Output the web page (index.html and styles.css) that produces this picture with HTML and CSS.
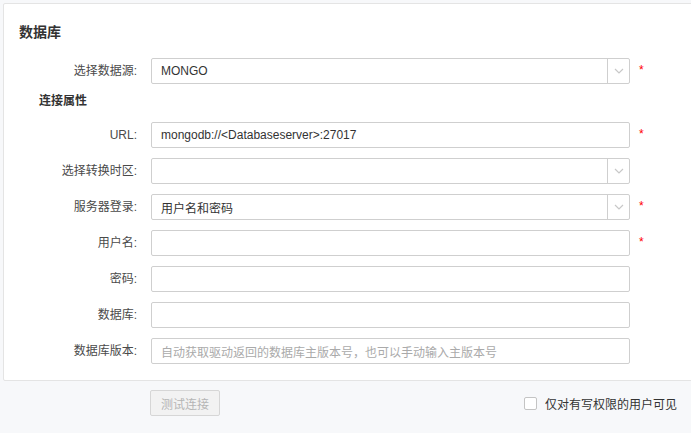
FILE: index.html
```html
<!DOCTYPE html>
<html lang="zh">
<head>
<meta charset="utf-8">
<link rel="stylesheet" href="styles.css">
</head>
<body>
<div class="page">
  <div class="card">
    <div class="title">数据库</div>
    <div class="row">
      <div class="label">选择数据源:</div>
      <div class="field select"><span class="value">MONGO</span><span class="arrow"><svg width="10" height="6" viewBox="0 0 10 6"><path d="M1 1 L5 5 L9 1" fill="none" stroke="#c8c8c8" stroke-width="1.2"/></svg></span></div>
      <span class="req">*</span>
    </div>
    <div class="section">连接属性</div>
    <div class="row">
      <div class="label">URL:</div>
      <div class="field"><span class="value">mongodb://&lt;Databaseserver&gt;:27017</span></div>
      <span class="req">*</span>
    </div>
    <div class="row">
      <div class="label">选择转换时区:</div>
      <div class="field select"><span class="value"></span><span class="arrow"><svg width="10" height="6" viewBox="0 0 10 6"><path d="M1 1 L5 5 L9 1" fill="none" stroke="#c8c8c8" stroke-width="1.2"/></svg></span></div>
    </div>
    <div class="row">
      <div class="label">服务器登录:</div>
      <div class="field select"><span class="value">用户名和密码</span><span class="arrow"><svg width="10" height="6" viewBox="0 0 10 6"><path d="M1 1 L5 5 L9 1" fill="none" stroke="#c8c8c8" stroke-width="1.2"/></svg></span></div>
      <span class="req">*</span>
    </div>
    <div class="row">
      <div class="label">用户名:</div>
      <div class="field"><span class="value"></span></div>
      <span class="req">*</span>
    </div>
    <div class="row gap1">
      <div class="label">密码:</div>
      <div class="field"><span class="value"></span></div>
    </div>
    <div class="row">
      <div class="label">数据库:</div>
      <div class="field"><span class="value"></span></div>
    </div>
    <div class="row">
      <div class="label">数据库版本:</div>
      <div class="field"><span class="value placeholder">自动获取驱动返回的数据库主版本号，也可以手动输入主版本号</span></div>
    </div>
  </div>
  <div class="footer">
    <button class="btn" disabled>测试连接</button>
    <label class="check"><span class="box"></span><span>仅对有写权限的用户可见</span></label>
  </div>
</div>
</body>
</html>
```
FILE: styles.css
```css
html, body {
  margin: 0;
  padding: 0;
}
body {
  background: #f7f8fa;
  overflow: hidden;
  font-family: "Liberation Sans", "Noto Sans CJK SC", sans-serif;
  font-size: 12px;
  color: #333;
}
.page {
  padding: 3px 0 0 3px;
}
.card {
  background: #fff;
  border: 1px solid #e4e4e4;
  border-radius: 2px;
  margin-right: -10px;
  padding: 18px 0 16px 0;
}
.title {
  font-size: 14px;
  font-weight: bold;
  line-height: 20px;
  margin-left: 15px;
  margin-bottom: 16px;
  color: #333;
}
.row {
  display: flex;
  align-items: center;
  height: 26px;
  margin-bottom: 10px;
}
.row:last-child {
  margin-bottom: 0;
}
.gap1 {
  margin-top: 1px;
}
.label {
  width: 133px;
  text-align: right;
  margin-right: 14px;
  color: #4a4a4a;
  line-height: 26px;
}
.field {
  box-sizing: border-box;
  width: 479px;
  height: 26px;
  border: 1px solid #cfcfcf;
  border-radius: 2px;
  display: flex;
  align-items: center;
  background: #fff;
}
.value {
  flex: 1;
  padding-left: 9px;
  color: #333;
  white-space: nowrap;
  overflow: hidden;
}
.placeholder {
  color: #aaa;
}
.arrow {
  width: 21px;
  height: 24px;
  border-left: 1px solid #cfcfcf;
  display: flex;
  align-items: center;
  justify-content: center;
}
.req {
  color: #f00;
  margin-left: 9px;
  font-size: 12px;
  line-height: 12px;
  align-self: flex-start;
  margin-top: 6px;
}
.section {
  font-weight: bold;
  line-height: 20px;
  margin-left: 35px;
  margin-top: -3px;
  margin-bottom: 11px;
  color: #333;
}
.footer {
  display: flex;
  justify-content: space-between;
  align-items: center;
  padding: 9px 14px 0 147px;
}
.btn {
  box-sizing: border-box;
  height: 26px;
  width: 70px;
  border: 1px solid #d6d6d6;
  border-radius: 2px;
  background: #f2f2f2;
  color: #b5b5b5;
  font-family: "Liberation Sans", "Noto Sans CJK SC", sans-serif;
  font-size: 12px;
  padding: 0;
}
.check {
  display: flex;
  align-items: center;
  color: #333;
}
.box {
  box-sizing: border-box;
  width: 13px;
  height: 13px;
  border: 1px solid #c4c4c4;
  border-radius: 2px;
  background: #fff;
  margin-right: 8px;
}
```
